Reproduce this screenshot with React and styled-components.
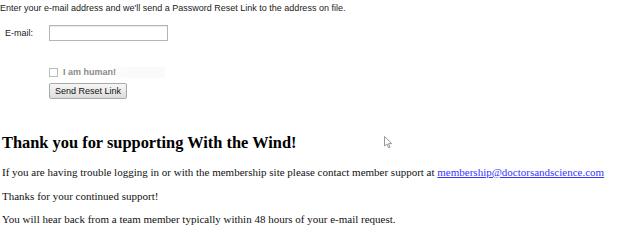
import React from 'react'
import styled, { createGlobalStyle } from 'styled-components'

const Global = createGlobalStyle`
  body {
    margin: 0;
    background: #fff;
    font-family: "Times New Roman", "Liberation Serif", serif;
  }
`

const Page = styled.div`
  padding: 0 2px;
`

const Form = styled.form`
  font-family: Arial, "Liberation Sans", sans-serif;
  font-size: 9px;
  line-height: 11px;
  color: #1a1a1a;
  margin: 0 0 0 -2px;
`

const Intro = styled.div`
  padding-top: 3px;
`

const Row = styled.div`
  display: flex;
  align-items: center;
  margin-top: 11px;
  padding-left: 5px;
`

const Label = styled.label`
  width: 44px;
`

const EmailInput = styled.input`
  width: 119px;
  height: 16px;
  box-sizing: border-box;
  border: 1px solid #b5b5b5;
  box-shadow: inset 0 1px 1px rgba(0, 0, 0, 0.08);
  padding: 0 3px;
  margin: 0;
  font-size: 9px;
`

const Controls = styled.div`
  display: flex;
  flex-direction: column;
  align-items: flex-start;
  gap: 5px;
  padding-left: 49px;
  margin-top: 26px;
`

const Human = styled.label`
  display: flex;
  align-items: center;
  gap: 5px;
  width: 116px;
  height: 11px;
  background: linear-gradient(to right, #fff 50%, #fafafa 70%);
  color: #8a8a8a;
  font-weight: bold;
`

const Box = styled.span`
  width: 9px;
  height: 9px;
  box-sizing: border-box;
  border: 1px solid #bbb;
  background: #fff;
`

const Button = styled.button`
  font-family: Arial, "Liberation Sans", sans-serif;
  font-size: 9px;
  line-height: 11px;
  color: #111;
  height: 16px;
  margin: 0;
  padding: 0 5px;
  border: 1px solid #a8a8a8;
  border-radius: 2px;
  background: linear-gradient(#f7f7f7, #dcdcdc);
`

const Heading = styled.h2`
  font-size: 16.4px;
  line-height: 18px;
  font-weight: bold;
  margin: 35px 0 14px;
  color: #000;
`

const Text = styled.p`
  font-size: 11px;
  line-height: 13px;
  margin: 0 0 10.5px;
  color: #111;
`

const Mail = styled.a`
  color: #3535ff;
`

const Cursor = styled.svg`
  position: absolute;
  left: 384px;
  top: 136px;
`

export default function App() {
  return (
    <Page>
      <Global />
      <Form>
        <Intro>Enter your e-mail address and we'll send a Password Reset Link to the address on file.</Intro>
        <Row>
          <Label>E-mail:</Label>
          <EmailInput type="text" />
        </Row>
        <Controls>
          <Human><Box />I am human!</Human>
          <Button type="button">Send Reset Link</Button>
        </Controls>
      </Form>
      <Heading>Thank you for supporting With the Wind!</Heading>
      <Text>
        If you are having trouble logging in or with the membership site please contact member support at{' '}
        <Mail href="#">membership@doctorsandscience.com</Mail>
      </Text>
      <Text>Thanks for your continued support!</Text>
      <Text>You will hear back from a team member typically within 48 hours of your e-mail request.</Text>
      <Cursor width="9" height="13" viewBox="0 0 9 13">
        <path d="M0.5 0.5 L0.5 10 L3 8 L4.6 11.8 L6 11.2 L4.5 7.6 L7.8 7.6 Z" fill="#fff" stroke="#999" strokeWidth="1" />
      </Cursor>
    </Page>
  )
}
